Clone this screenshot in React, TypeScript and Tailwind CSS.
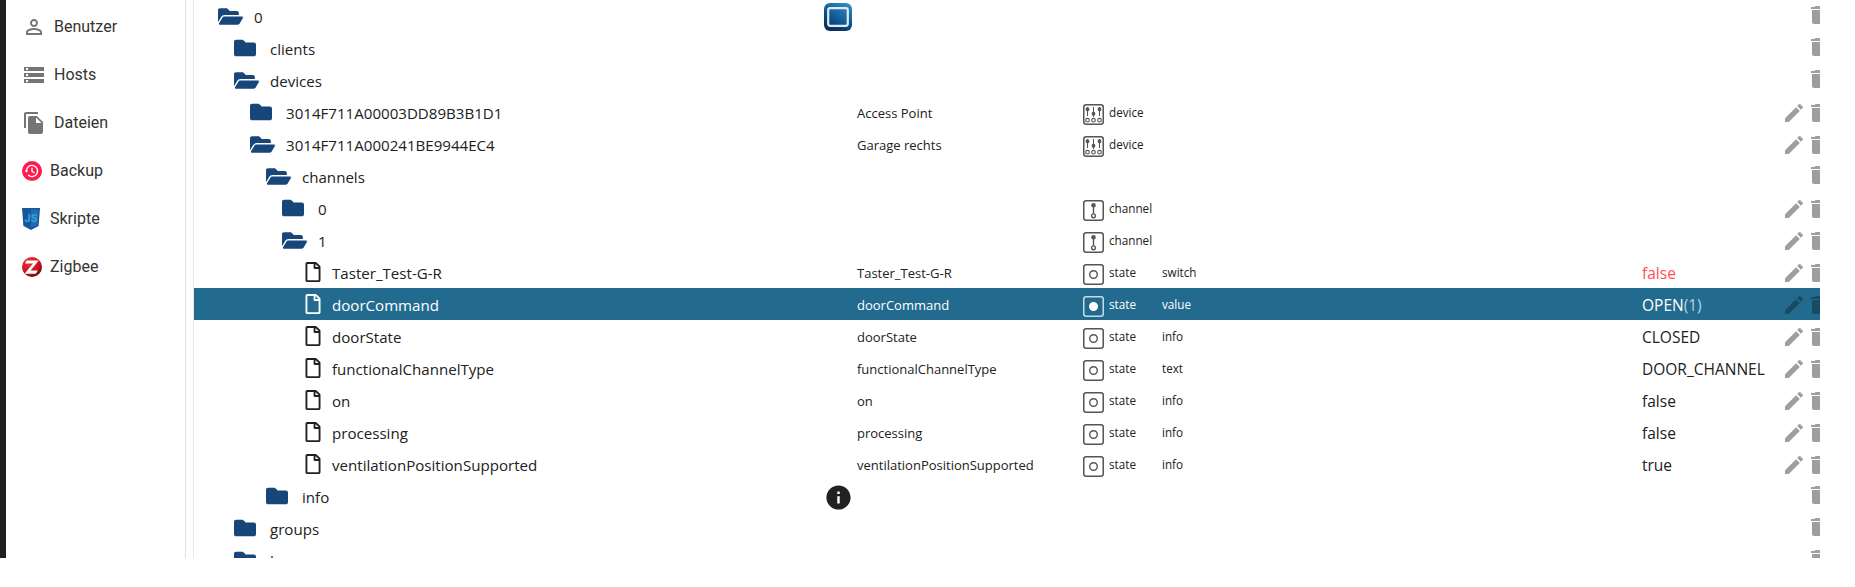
import React from 'react'
import { FaFolder, FaFolderOpen, FaRegFile } from 'react-icons/fa'
import { MdDelete, MdEdit, MdFileCopy, MdInfo, MdOutlinePersonOutline, MdStorage } from 'react-icons/md'

type Kind = 'device' | 'channel' | 'state'

type Row = {
  name: string
  level: number
  icon: 'open' | 'closed' | 'file'
  title?: string
  kind?: Kind
  role?: string
  value?: string
  ack?: string
  red?: boolean
  selected?: boolean
  edit?: boolean
  slot?: 'logo' | 'info'
}

const rows: Row[] = [
  { name: '0', level: 0, icon: 'open', slot: 'logo' },
  { name: 'clients', level: 1, icon: 'closed' },
  { name: 'devices', level: 1, icon: 'open' },
  { name: '3014F711A00003DD89B3B1D1', level: 2, icon: 'closed', title: 'Access Point', kind: 'device', edit: true },
  { name: '3014F711A000241BE9944EC4', level: 2, icon: 'open', title: 'Garage rechts', kind: 'device', edit: true },
  { name: 'channels', level: 3, icon: 'open' },
  { name: '0', level: 4, icon: 'closed', kind: 'channel', edit: true },
  { name: '1', level: 4, icon: 'open', kind: 'channel', edit: true },
  { name: 'Taster_Test-G-R', level: 5, icon: 'file', title: 'Taster_Test-G-R', kind: 'state', role: 'switch', value: 'false', red: true, edit: true },
  { name: 'doorCommand', level: 5, icon: 'file', title: 'doorCommand', kind: 'state', role: 'value', value: 'OPEN', ack: '(1)', selected: true, edit: true },
  { name: 'doorState', level: 5, icon: 'file', title: 'doorState', kind: 'state', role: 'info', value: 'CLOSED', edit: true },
  { name: 'functionalChannelType', level: 5, icon: 'file', title: 'functionalChannelType', kind: 'state', role: 'text', value: 'DOOR_CHANNEL', edit: true },
  { name: 'on', level: 5, icon: 'file', title: 'on', kind: 'state', role: 'info', value: 'false', edit: true },
  { name: 'processing', level: 5, icon: 'file', title: 'processing', kind: 'state', role: 'info', value: 'false', edit: true },
  { name: 'ventilationPositionSupported', level: 5, icon: 'file', title: 'ventilationPositionSupported', kind: 'state', role: 'info', value: 'true', edit: true },
  { name: 'info', level: 3, icon: 'closed', slot: 'info' },
  { name: 'groups', level: 1, icon: 'closed' },
  { name: 'homes', level: 1, icon: 'closed' },
]

const BackupIcon = () => (
  <svg width="20" height="20" viewBox="0 0 20 20" fill="none">
    <circle cx="10" cy="10" r="10" fill="#ff1a4b" />
    <path d="M4.4 10a5.6 5.6 0 1 1 1.7 4" stroke="#fff" strokeWidth="1.4" />
    <path d="M2.7 9.6h3.4L4.4 11.8z" fill="#fff" />
    <path d="M10 6.8v3.6l2.6 1.6" stroke="#fff" strokeWidth="1.3" />
  </svg>
)

const ScriptIcon = () => (
  <svg width="18" height="22" viewBox="0 0 18 22">
    <path d="M0 0h18l-1.4 18L9 22l-7.6-4z" fill="#17569b" />
    <path d="M9 1.5h7.4l-1.2 15.4L9 20z" fill="#1f6cb5" />
    <text x="9" y="14" textAnchor="middle" fontSize="11" fontWeight="700" fontFamily="Roboto, sans-serif" fill="#38a3dc">
      JS
    </text>
  </svg>
)

const ZigbeeIcon = () => (
  <svg width="20" height="20" viewBox="0 0 20 20" fill="none">
    <defs>
      <radialGradient id="zb" cx="35%" cy="25%" r="85%">
        <stop offset="0" stopColor="#f0323a" />
        <stop offset="0.65" stopColor="#c5121c" />
        <stop offset="1" stopColor="#4a0508" />
      </radialGradient>
    </defs>
    <circle cx="10" cy="10" r="10" fill="url(#zb)" />
    <path d="M4.5 3.6h12.2L8.6 13.6h7.2l-2 3.2H2.6l8.4-10.2H3z" fill="#fff" />
  </svg>
)

const navItems = [
  { label: 'Benutzer', icon: <MdOutlinePersonOutline size={24} className="text-[#757575]" />, box: 'w-[32px]' },
  { label: 'Hosts', icon: <MdStorage size={24} className="text-[#757575]" />, box: 'w-[32px]' },
  { label: 'Dateien', icon: <MdFileCopy size={24} className="text-[#757575]" />, box: 'w-[32px]' },
  { label: 'Backup', icon: <BackupIcon />, box: 'w-[28px]' },
  { label: 'Skripte', icon: <ScriptIcon />, box: 'w-[28px]' },
  { label: 'Zigbee', icon: <ZigbeeIcon />, box: 'w-[28px]' },
]

const Sidebar = () => (
  <nav className="w-[180px] shrink-0 border-r border-[#e0e0e0] pt-[3px] font-['Roboto',sans-serif] text-[16px] text-[#333333]">
    {navItems.map((item) => (
      <div key={item.label} className="flex h-12 items-center pl-[16px]">
        <span className={`flex shrink-0 items-center ${item.box}`}>{item.icon}</span>
        <span>{item.label}</span>
      </div>
    ))}
  </nav>
)

const TypeIcon = ({ kind, selected }: { kind: Kind; selected?: boolean }) => {
  const c = selected ? '#ffffff' : '#555555'
  return (
    <svg width="21" height="21" viewBox="0 0 21 21" fill="none" className="mt-[2px] shrink-0">
      <rect x="0.75" y="0.75" width="19.5" height="19.5" rx="2.5" stroke={selected ? '#c5dbe6' : c} strokeWidth="1.5" />
      {kind === 'state' && <circle cx="10.5" cy="10.5" r="3.8" stroke={c} strokeWidth="1.4" fill={selected ? c : 'none'} />}
      {kind === 'channel' && (
        <g stroke={c} strokeWidth="1.4">
          <circle cx="10.5" cy="5.2" r="1.6" fill={c} />
          <path d="M10.5 6.5v7" />
          <circle cx="10.5" cy="15.8" r="1.9" />
        </g>
      )}
      {kind === 'device' && (
        <g stroke={c} strokeWidth="1.1">
          <path d="M4.5 3v9M10.5 3v10M16.5 3v9" />
          <circle cx="4.5" cy="5.2" r="1.4" fill={c} />
          <circle cx="10.5" cy="9.8" r="1.4" fill={c} />
          <circle cx="16.5" cy="5.2" r="1.4" fill={c} />
          <circle cx="4.5" cy="16.2" r="1.8" />
          <circle cx="10.5" cy="16.2" r="1.8" />
          <circle cx="16.5" cy="16.2" r="1.8" />
        </g>
      )}
    </svg>
  )
}

const Logo = () => (
  <svg width="28" height="28" viewBox="0 0 28 28">
    <defs>
      <linearGradient id="lg" x1="0.8" y1="0" x2="0.3" y2="1">
        <stop offset="0" stopColor="#2f8fc6" />
        <stop offset="0.55" stopColor="#0f5288" />
        <stop offset="1" stopColor="#0a2c58" />
      </linearGradient>
      <linearGradient id="lgi" x1="0.9" y1="0" x2="0.1" y2="1">
        <stop offset="0" stopColor="#2a7cb8" />
        <stop offset="0.5" stopColor="#14609c" />
        <stop offset="1" stopColor="#0c3c72" />
      </linearGradient>
    </defs>
    <rect width="28" height="28" rx="6" fill="url(#lg)" />
    <rect x="4.2" y="5.2" width="19.6" height="17.6" rx="2" fill="url(#lgi)" stroke="#dfeaf3" strokeWidth="2.2" />
  </svg>
)

const TreeIcon = ({ icon }: { icon: Row['icon'] }) => {
  if (icon === 'file')
    return (
      <span className="-mt-[1px] flex w-[34px] shrink-0 pl-[5px]">
        <FaRegFile size={20} />
      </span>
    )
  return (
    <span className="-mt-[1px] flex w-9 shrink-0 text-[#17477a]">
      {icon === 'open' ? <FaFolderOpen size={25} /> : <FaFolder size={22} />}
    </span>
  )
}

const ObjectRow = ({ row }: { row: Row }) => (
  <div
    className={`flex h-8 shrink-0 items-center overflow-hidden pt-[2px] ${
      row.selected ? 'bg-[#226b8f] text-white' : 'bg-white text-[#212121]'
    }`}
  >
    <div className="flex w-[630px] shrink-0 items-center pl-6 text-[15.1px]">
      <span className="flex items-center" style={{ marginLeft: row.level * 16 }}>
        <TreeIcon icon={row.icon} />
        <span>{row.name}</span>
      </span>
    </div>
    <div className="flex w-[33px] shrink-0 items-center">
      {row.slot === 'logo' && <Logo />}
      {row.slot === 'info' && <MdInfo size={29} className="text-[#212121]" />}
    </div>
    <div className="mt-[2px] w-[226px] shrink-0 whitespace-nowrap text-[13px]">{row.title}</div>
    <div className="flex w-[79px] shrink-0 items-center gap-[5px] text-[11.7px]">
      {row.kind && <TypeIcon kind={row.kind} selected={row.selected} />}
      <span>{row.kind}</span>
    </div>
    <div className="w-[480px] shrink-0 text-[11.7px]">{row.role}</div>
    <div className={`mt-[2px] w-[140px] shrink-0 whitespace-nowrap text-[15.5px] ${row.red ? 'text-[#ff4d55]' : ''}`}>
      {row.value}
      {row.ack && <span className="text-[#b5d3e2]">{row.ack}</span>}
    </div>
    <div
      className={`flex shrink-0 items-center ${row.selected ? 'text-[#184a63]' : 'text-[#9e9e9e]'} ${
        row.edit ? '' : '-mt-[4px]'
      }`}
    >
      <span className="w-6 shrink-0">{row.edit && <MdEdit size={24} />}</span>
      <MdDelete size={24} className="shrink-0" />
    </div>
  </div>
)

export default function App() {
  return (
    <div className="flex h-[558px] w-[1855px] overflow-hidden bg-white font-['Open_Sans',sans-serif]">
      <div className="w-[6px] shrink-0 bg-[#1f1f1f]" />
      <Sidebar />
      <main className="ml-[7px] flex w-[1627px] shrink-0 flex-col overflow-hidden border-l border-[#e8e8e8]">
        {rows.map((row, i) => (
          <ObjectRow key={i} row={row} />
        ))}
      </main>
    </div>
  )
}
